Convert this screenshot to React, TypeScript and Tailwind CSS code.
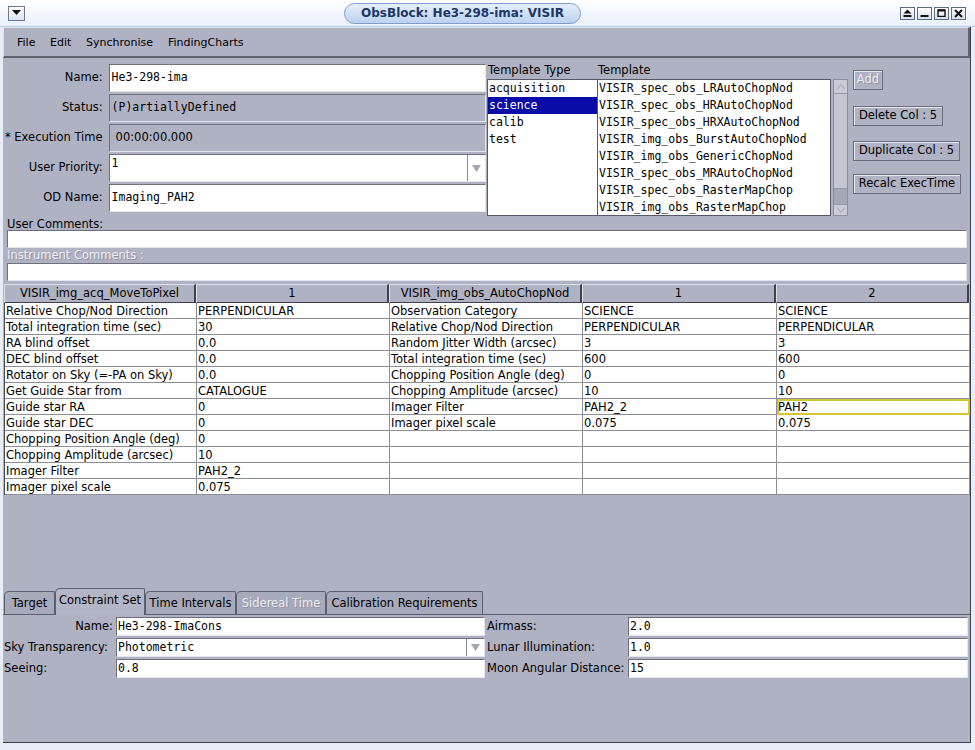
import React from "react";

const SANS = "font-['DejaVu_Sans',sans-serif]";
const MONO = "font-['DejaVu_Sans_Mono',monospace]";

const FIELD =
  "border-t border-l border-[#6d6f7c] border-b border-r border-b-[#e4e6ee] border-r-[#e4e6ee]";

const TEMPLATE_TYPES = ["acquisition", "science", "calib", "test"];
const TEMPLATES = [
  "VISIR_spec_obs_LRAutoChopNod",
  "VISIR_spec_obs_HRAutoChopNod",
  "VISIR_spec_obs_HRXAutoChopNod",
  "VISIR_img_obs_BurstAutoChopNod",
  "VISIR_img_obs_GenericChopNod",
  "VISIR_spec_obs_MRAutoChopNod",
  "VISIR_spec_obs_RasterMapChop",
  "VISIR_img_obs_RasterMapChop",
];

const ACQ_ROWS: [string, string][] = [
  ["Relative Chop/Nod Direction", "PERPENDICULAR"],
  ["Total integration time (sec)", "30"],
  ["RA blind offset", "0.0"],
  ["DEC blind offset", "0.0"],
  ["Rotator on Sky (=-PA on Sky)", "0.0"],
  ["Get Guide Star from", "CATALOGUE"],
  ["Guide star RA", "0"],
  ["Guide star DEC", "0"],
  ["Chopping Position Angle (deg)", "0"],
  ["Chopping Amplitude (arcsec)", "10"],
  ["Imager Filter", "PAH2_2"],
  ["Imager pixel scale", "0.075"],
];

const OBS_ROWS: [string, string, string][] = [
  ["Observation Category", "SCIENCE", "SCIENCE"],
  ["Relative Chop/Nod Direction", "PERPENDICULAR", "PERPENDICULAR"],
  ["Random Jitter Width (arcsec)", "3", "3"],
  ["Total integration time (sec)", "600", "600"],
  ["Chopping Position Angle (deg)", "0", "0"],
  ["Chopping Amplitude (arcsec)", "10", "10"],
  ["Imager Filter", "PAH2_2", "PAH2"],
  ["Imager pixel scale", "0.075", "0.075"],
];

function ComboArrow() {
  return (
    <div className="w-[18px] h-full border-l border-[#8a8c98] bg-white flex items-center justify-center">
      <svg width="9" height="9" viewBox="0 0 9 9">
        <path d="M0 1 L9 1 L4.5 8 Z" fill="#a4a6b2" />
      </svg>
    </div>
  );
}

function TitleButton({ children }: { children: React.ReactNode }) {
  return (
    <div className="w-[15px] h-[13px] border border-[#5d6b85] bg-gradient-to-b from-white to-[#d8e2f0] flex items-center justify-center">
      {children}
    </div>
  );
}

function TitleBar() {
  return (
    <div className="h-[27px] shrink-0 relative bg-gradient-to-b from-white to-[#e8f0fb] border-b border-[#b6cbe8] flex items-center">
      <div className="ml-[8px] w-[17px] h-[15px] border border-[#6c7890] bg-gradient-to-b from-white to-[#dae3f0] flex items-center justify-center">
        <svg width="9" height="6" viewBox="0 0 9 6">
          <path d="M0 0 L9 0 L4.5 5 Z" fill="#111" />
        </svg>
      </div>
      <div className="flex-1 flex justify-center">
        <div
          className={`${SANS} h-[21px] px-[16px] rounded-full border border-[#7f9ccb] bg-gradient-to-b from-[#e6eefa] to-[#bcd2f0] text-[12px] font-bold text-[#1d3768] flex items-center`}
        >
          ObsBlock: He3-298-ima: VISIR
        </div>
      </div>
      <div className="mr-[9px] flex gap-[2px]">
        <TitleButton>
          <svg width="9" height="8" viewBox="0 0 9 8">
            <path d="M0.5 4.5 L4.5 0.5 L8.5 4.5 Z" fill="#111" />
            <rect x="0.5" y="6" width="8" height="2" fill="#111" />
          </svg>
        </TitleButton>
        <TitleButton>
          <svg width="9" height="8" viewBox="0 0 9 8">
            <rect x="0.5" y="6" width="8" height="2" fill="#111" />
          </svg>
        </TitleButton>
        <TitleButton>
          <svg width="9" height="8" viewBox="0 0 9 8">
            <rect x="1" y="1" width="7" height="6.5" fill="none" stroke="#111" strokeWidth="1.4" />
            <rect x="1" y="0.5" width="7" height="2" fill="#111" />
          </svg>
        </TitleButton>
        <TitleButton>
          <svg width="9" height="9" viewBox="0 0 9 9">
            <path d="M1 1 L8 8 M8 1 L1 8" stroke="#111" strokeWidth="2" />
          </svg>
        </TitleButton>
      </div>
    </div>
  );
}

function MenuBar() {
  return (
    <div
      className={`${SANS} h-[31px] shrink-0 flex items-center pl-[10px] pt-[3px] text-[11px] text-black border-t border-l border-[#e2e4ee] border-b-2 border-r-2 border-b-[#60636f] border-r-[#60636f]`}
    >
      <span className="w-[33px] px-[3px]">File</span>
      <span className="w-[36px] px-[3px]">Edit</span>
      <span className="w-[82px] px-[3px]">Synchronise</span>
      <span className="px-[3px]">FindingCharts</span>
    </div>
  );
}

function FormRow({ label, children }: { label: string; children: React.ReactNode }) {
  return (
    <div className="h-[28px] flex items-center">
      <div className={`${SANS} w-[100px] text-right whitespace-nowrap text-[11.5px] text-black`}>{label}</div>
      <div className="w-[6px]" />
      <div className="w-[379px] h-full">{children}</div>
    </div>
  );
}

function Button({ label, disabled, w }: { label: string; disabled?: boolean; w: string }) {
  return (
    <div
      className={`${SANS} ${w} h-[20px] flex items-center justify-center text-[11.5px] border border-[#6b6d7a] shadow-[inset_1px_1px_0_#e6e8f0] ${
        disabled ? "text-[#eceef4] [text-shadow:1px_1px_0_#8f92a2]" : "text-black"
      }`}
    >
      {label}
    </div>
  );
}

function TopSection() {
  return (
    <div className="h-[158px] shrink-0 flex pt-[6px]">
      <div className="w-[483px] flex flex-col gap-[2px]">
        <FormRow label="Name:">
          <div className={`${FIELD} ${MONO} h-full bg-white flex items-center pl-[2px] text-[11.5px]`}>He3-298-ima</div>
        </FormRow>
        <FormRow label="Status:">
          <div className={`${FIELD} ${MONO} h-full flex items-center pl-[2px] text-[11.5px]`}>(P)artiallyDefined</div>
        </FormRow>
        <FormRow label="* Execution Time">
          <div className={`${FIELD} ${SANS} h-full flex items-center pl-[6px] text-[11.5px]`}>00:00:00.000</div>
        </FormRow>
        <FormRow label="User Priority:">
          <div className={`${FIELD} h-full bg-white flex`}>
            <div className={`${MONO} flex-1 pl-[2px] pt-[1px] text-[11.5px] leading-[14px]`}>1</div>
            <ComboArrow />
          </div>
        </FormRow>
        <FormRow label="OD Name:">
          <div className={`${FIELD} ${MONO} h-full bg-white flex items-center pl-[2px] text-[11.5px]`}>Imaging_PAH2</div>
        </FormRow>
      </div>

      {/* template type list */}
      <div className="ml-[1px] w-[110px] flex flex-col">
        <div className={`${SANS} h-[15px] pl-[1px] text-[11.5px] leading-[13px]`}>Template Type</div>
        <div className="h-[137px] bg-white border border-[#55586a] border-r-0">
          {TEMPLATE_TYPES.map((t) => (
            <div
              key={t}
              className={`${MONO} h-[17px] pl-[1px] text-[11.5px] leading-[17px] ${
                t === "science" ? "bg-[#0a0ca8] text-white" : "text-black"
              }`}
            >
              {t}
            </div>
          ))}
        </div>
      </div>

      {/* template list */}
      <div className="w-[234px] flex flex-col">
        <div className={`${SANS} h-[15px] pl-[1px] text-[11.5px] leading-[13px]`}>Template</div>
        <div className="h-[137px] bg-white border border-[#55586a] overflow-hidden">
          {TEMPLATES.map((t) => (
            <div key={t} className={`${MONO} h-[17px] pl-[1px] text-[11.5px] leading-[17px] text-black whitespace-nowrap`}>
              {t}
            </div>
          ))}
        </div>
      </div>

      {/* scrollbar */}
      <div className="ml-[2px] mt-[15px] w-[15px] h-[137px] border border-[#8c8e9c] bg-[#c9cbd6] flex flex-col">
        <div className="h-[14px] border-b border-[#9597a5] flex items-center justify-center">
          <svg width="8" height="6" viewBox="0 0 8 6">
            <path d="M0 5.5 L4 0.5 L8 5.5" fill="none" stroke="#a2a4b2" />
          </svg>
        </div>
        <div className="h-[95px] bg-[#c4c6d2] border-b border-[#9597a5]" />
        <div className="flex-1 bg-[#a4a7b8]" />
        <div className="h-[11px] border-t border-[#9597a5] flex items-center justify-center">
          <svg width="8" height="6" viewBox="0 0 8 6">
            <path d="M0 0.5 L4 5.5 L8 0.5" fill="none" stroke="#a2a4b2" />
          </svg>
        </div>
      </div>

      {/* action buttons */}
      <div className="ml-[5px] flex flex-col">
        <div className="mt-[6px]">
          <Button label="Add" disabled w="w-[30px]" />
        </div>
        <div className="mt-[16px]">
          <Button label="Delete Col : 5" w="w-[90px]" />
        </div>
        <div className="mt-[15px]">
          <Button label="Duplicate Col : 5" w="w-[107px]" />
        </div>
        <div className="mt-[13px]">
          <Button label="Recalc ExecTime" w="w-[108px]" />
        </div>
      </div>
    </div>
  );
}

function Comments() {
  return (
    <div className={`${SANS} shrink-0 pl-[4px] pr-[3px] text-[11.5px]`}>
      <div className="h-[14px] leading-[14px] pt-[1px]">User Comments:</div>
      <div className={`${FIELD} h-[18px] bg-white`} />
      <div className="h-[15px] leading-[15px] text-[#eceef4] [text-shadow:1px_1px_0_#8f92a2]">Instrument Comments :</div>
      <div className={`${FIELD} h-[18px] bg-white`} />
    </div>
  );
}

const COLS = "grid grid-cols-[192px_193px_193px_194px_193px]";

function HeaderCell({ label }: { label: string }) {
  return (
    <div className="h-[19px] flex items-center justify-center border-t border-l border-[#dfe1ea] border-r-2 border-r-[#3f414d] border-b border-b-[#3f414d] text-[11.5px]">
      {label}
    </div>
  );
}

function Cell({ v, hl }: { v: string; hl?: boolean }) {
  return (
    <div
      className={`h-[16px] border-r border-b border-[#8d8e98] pl-[1px] pt-[1px] text-[11.5px] leading-[15px] whitespace-nowrap overflow-hidden ${
        hl ? "outline-2 outline-[#d4c733] -outline-offset-2" : ""
      }`}
    >
      {v}
    </div>
  );
}

function ParamTable() {
  const rows = ACQ_ROWS.map((a, i) => {
    const o = OBS_ROWS[i] ?? ["", "", ""];
    return [a[0], a[1], o[0], o[1], o[2]];
  });
  return (
    <div className={`${SANS} h-[303px] shrink-0 mt-[3px] ml-[1px] w-[965px] flex flex-col text-black`}>
      <div className={COLS}>
        <HeaderCell label="VISIR_img_acq_MoveToPixel" />
        <HeaderCell label="1" />
        <HeaderCell label="VISIR_img_obs_AutoChopNod" />
        <HeaderCell label="1" />
        <HeaderCell label="2" />
      </div>
      <div className={`${COLS} bg-white border-l border-[#4a4c58]`}>
        {rows.map((r, i) =>
          r.map((v, j) => <Cell key={`${i}-${j}`} v={v} hl={i === 6 && j === 4} />)
        )}
      </div>
    </div>
  );
}

const TABS = [
  { label: "Target", w: "w-[51px]" },
  { label: "Constraint Set", w: "w-[90px]", active: true },
  { label: "Time Intervals", w: "w-[91px]" },
  { label: "Sidereal Time", w: "w-[90px]", disabled: true },
  { label: "Calibration Requirements", w: "w-[157px]" },
];

function Tabs() {
  return (
    <div className={`${SANS} h-[27px] shrink-0 flex items-end pl-[1px] text-[11.5px]`}>
      {TABS.map((t) => (
        <div
          key={t.label}
          className={`${t.w} flex items-center justify-center border-t border-l border-r border-[#5b5e6c] rounded-tl-[5px] rounded-tr-[2px] whitespace-nowrap ${
            t.active
              ? "h-[27px] bg-[#b3b6c6] relative z-10 -mb-px pb-[3px]"
              : "h-[23px] bg-[#a7aabb] pt-[1px]"
          } ${t.disabled ? "text-[#eceef4] [text-shadow:1px_1px_0_#8f92a2]" : "text-black"}`}
        >
          {t.label}
        </div>
      ))}
    </div>
  );
}

function ConstraintRow({
  label,
  labelAlign,
  value,
  combo,
  rLabel,
  rValue,
}: {
  label: string;
  labelAlign: string;
  value: string;
  combo?: boolean;
  rLabel: string;
  rValue: string;
}) {
  return (
    <div className="h-[19px] flex items-stretch text-[11.5px]">
      <div className={`w-[112px] flex items-center whitespace-nowrap ${labelAlign}`}>{label}</div>
      <div className={`${FIELD} w-[369px] bg-white flex`}>
        <div className={`${MONO} flex-1 flex items-center pl-[1px]`}>{value}</div>
        {combo && <ComboArrow />}
      </div>
      <div className="w-[2px]" />
      <div className="w-[141px] flex items-center whitespace-nowrap">{rLabel}</div>
      <div className={`${FIELD} ${MONO} w-[340px] bg-white flex items-center pl-[1px]`}>{rValue}</div>
    </div>
  );
}

function ConstraintPanel() {
  return (
    <div className={`${SANS} flex-1 border-t border-[#5b5e6c] pt-[2px] pl-[1px] flex flex-col gap-[2px] text-black`}>
      <ConstraintRow label="Name:" labelAlign="justify-end pr-[3px]" value="He3-298-ImaCons" rLabel="Airmass:" rValue="2.0" />
      <ConstraintRow
        label="Sky Transparency:"
        labelAlign="justify-start"
        value="Photometric"
        combo
        rLabel="Lunar Illumination:"
        rValue="1.0"
      />
      <ConstraintRow label="Seeing:" labelAlign="justify-start" value="0.8" rLabel="Moon Angular Distance:" rValue="15" />
    </div>
  );
}

export default function App() {
  return (
    <div className="w-[975px] h-[750px] bg-[#e8eef8] flex flex-col overflow-hidden">
      <TitleBar />
      <div className="flex-1 ml-[3px] mr-[4px] mb-[7px] bg-[#afb2c2] border-r border-b border-[#3c404e] flex flex-col">
        <MenuBar />
        <TopSection />
        <Comments />
        <ParamTable />
        <Tabs />
        <ConstraintPanel />
      </div>
    </div>
  );
}
